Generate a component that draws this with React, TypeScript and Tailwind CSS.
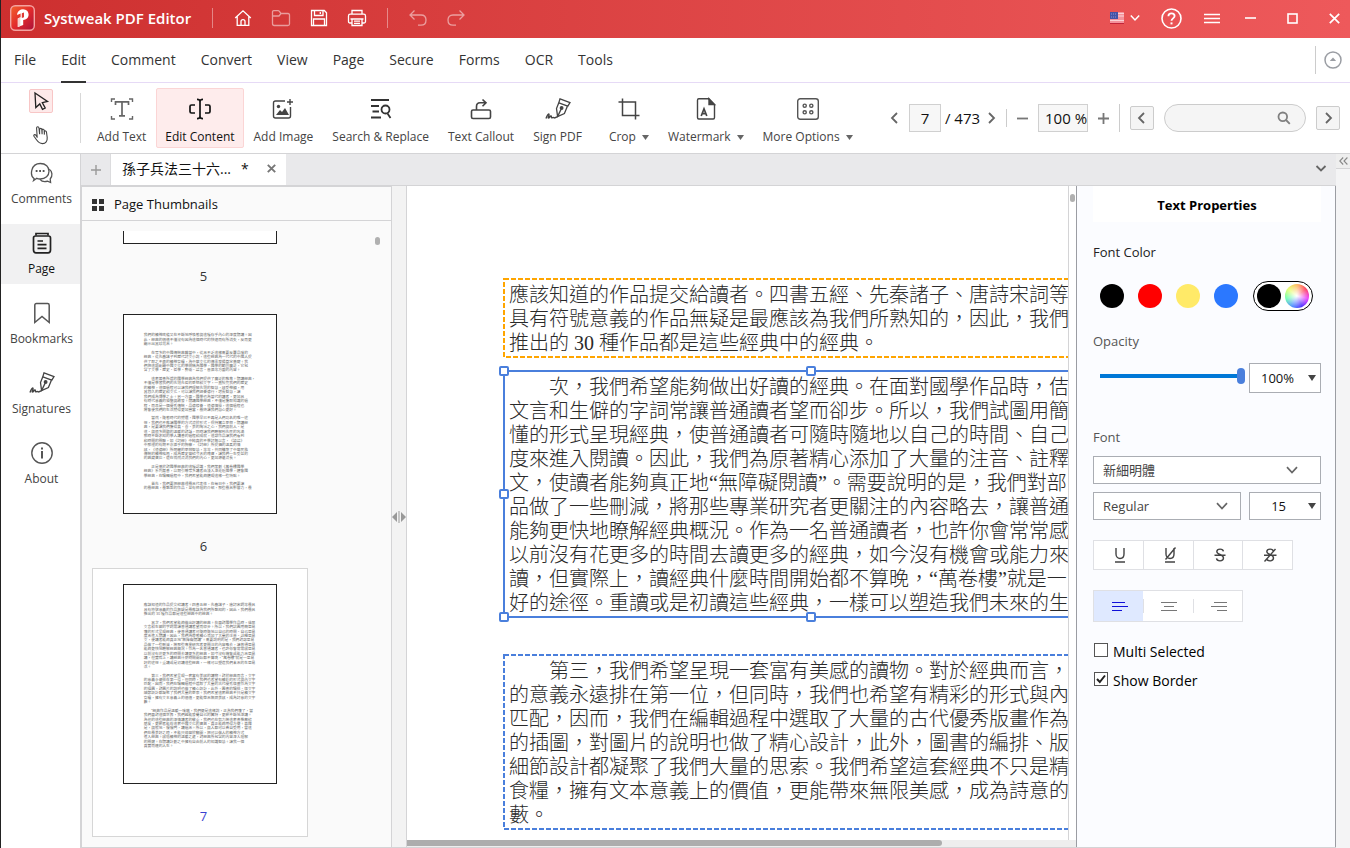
import { useState, type ReactNode } from "react";

const menus = ["File", "Edit", "Comment", "Convert", "View", "Page", "Secure", "Forms", "OCR", "Tools"];

const firstBlock = [
  "應該知道的作品提交給讀者。四書五經、先秦諸子、唐詩宋詞等",
  "具有符號意義的作品無疑是最應該為我們所熟知的，因此，我們",
  "推出的 30 種作品都是這些經典中的經典。",
];

const secondBlock = [
  "　　次，我們希望能夠做出好讀的經典。在面對國學作品時，佶",
  "文言和生僻的字詞常讓普通讀者望而卻步。所以，我們試圖用簡",
  "懂的形式呈現經典，使普通讀者可隨時隨地以自己的時間、自己",
  "度來進入閱讀。因此，我們為原著精心添加了大量的注音、註釋",
  "文，使讀者能夠真正地“無障礙閱讀”。需要說明的是，我們對部",
  "品做了一些刪減，將那些專業研究者更關注的內容略去，讓普通",
  "能夠更快地瞭解經典概況。作為一名普通讀者，也許你會常常感",
  "以前沒有花更多的時間去讀更多的經典，如今沒有機會或能力來",
  "讀，但實際上，讀經典什麼時間開始都不算晚，“萬卷樓”就是一",
  "好的途徑。重讀或是初讀這些經典，一樣可以塑造我們未來的生",
];

const thirdBlock = [
  "　　第三，我們希望呈現一套富有美感的讀物。對於經典而言，",
  "的意義永遠排在第一位，但同時，我們也希望有精彩的形式與內",
  "匹配，因而，我們在編輯過程中選取了大量的古代優秀版畫作為",
  "的插圖，對圖片的說明也做了精心設計，此外，圖書的編排、版",
  "細節設計都凝聚了我們大量的思索。我們希望這套經典不只是精",
  "食糧，擁有文本意義上的價值，更能帶來無限美感，成為詩意的",
  "藪。",
];

const page6 = [
  [
    "我們的精神底蘊又在不斷地呼喚著與這種存乎內心的深度閱讀。因",
    "此，經典的價值不僅沒有因為這個時代的快速而有所消失，反而更",
    "顯示出其珍貴來。",
  ],
  [
    "　　在眾多的中國傳統典籍當中，從來不乏這樣需要反覆品味的",
    "經典，從先秦諸子到歷代詩文小說，這些經典為一代代的中國人提",
    "供了取之不盡的精神食糧，為中華文化的傳承發揚奠定基礎。我",
    "們把這類彰顯中國文化的學問稱為國學，國學的範圍廣泛，它包",
    "含了文學、歷史、哲學、藝術、語言、音樂等方面的內容。",
  ],
  [
    "　　這套叢書所選的國學經典為我們提供了廣泛的教育。閱讀經典，",
    "不僅是學習我們的先賢先哲的思想和文字，一直照亮我們的歷史",
    "的精神，這個過程可以讓我們理解先賢的智慧，感受神韻，用",
    "其悠久的歷史和文化，可以讓我們涵養德行，增長智慧，讓",
    "我們成為博學之士。另一方面，國學也為當代的讀者，更加具",
    "有時代意義的借鑒與啟發。閱讀國學經典，不僅是獲取知識的過",
    "程，而且是一個優秀傳統、品德修養、道德情操，這個過程也",
    "將會使我們的生活變得更加豐富，最終讓我們慧心更好。",
  ],
  [
    "　　當然，隨著時代的變遷，國學早已不再是人們功名的唯一途",
    "徑，我們也不應讓國學的方式流於形式，保持獨立思想，閱讀經",
    "典，是要讓我們獲得真、善、美的陶冶之心，我們與前人、是",
    "這、與很多問題的溫暖的對話，同時讓我們瞭解到先民的充滿",
    "那時不斷求知的學人讀書的過程和成就，這部作品讓我們看到",
    "和時間的關聯，如《詩經》中純真的不學詩無以言，《論語》",
    "中那裡的有朋不亦樂乎的胸懷，《詩經》所提倡的溫柔的情",
    "感，《道德經》所閃耀的思辨智慧，等等，共同構築了中華民族",
    "傳統的精神格局，成為歷史留給今天的瑰寶，讓我們一生受益的",
    "的典藏寶庫，還在悄然流淌我們的內心，更加源遠流長。",
  ],
  [
    "　　正是基於對國學經典的這種認識，我們策劃《萬卷樓國學",
    "經典》系列叢書，以期引導眾多讀者由淺入深走近國學，體會國",
    "學經典，在編輯過程中，我們希望能夠體現這樣一些特點。",
  ],
  [
    "　　首先，我們要把經典裡最具代表性，在每日中，我們要讓",
    "的最經典，最熟悉的作品，並有條理的介紹，那些最具影響力，最",
  ],
];

const page7 = [
  firstBlock.map((line, i) => (i < 2 ? line + "最具" : line)),
  [...secondBlock.map((line, i) => (i === 0 ? line.replace("次", "其次") + "屈" : line + "單易")), "活。"],
  thirdBlock.map((line, i) => (i < 6 ? line + "文字" : line)),
  [
    "　　“經典作品是溫暖一味藥，我們便是這樣說，正為我們懂了，當",
    "我們面對這個世界，我們越能發覺自己的獨特，更願不斷地深讀。",
    "為他的這些經典的深情讀者的敬重，我們也在努力將這套書推薦給",
    "朋友，更願者能在這套中國文化的寶典、真正能夠用得方便。喜國",
    "是，與般地、慢慢門，讀過來。所以，與人都可以各自受用，當這",
    "們在最美好之時，不能只停留於翻開，把可以做人的精神方式",
    "進入經典。感悟精神的溫暖之處，對經典所包含的內容深入理解",
    "的關鍵。在閱讀計劃之中擁有自由前人的知識智慧。讓我一個",
    "真實而達的人生。",
  ],
];

function TitleIcon({ label, dim, children }: { label: string; dim?: boolean; children: ReactNode }) {
  return (
    <button
      aria-label={label}
      className={`flex h-5 w-5 items-center justify-center text-white ${dim ? "opacity-50" : ""}`}
    >
      <svg width="20" height="20" viewBox="0 0 20 20" fill="none" stroke="currentColor" strokeWidth="1.3">
        {children}
      </svg>
    </button>
  );
}

function Logo() {
  return (
    <svg width="25" height="26" viewBox="0 0 25 26" aria-hidden="true">
      <defs>
        <linearGradient id="logoFill" x1="0" y1="0" x2="1" y2="1">
          <stop offset="0" stopColor="#f2632c" />
          <stop offset="0.5" stopColor="#e22a2c" />
          <stop offset="1" stopColor="#a8103a" />
        </linearGradient>
      </defs>
      <rect x="0.7" y="0.7" width="23.6" height="24.6" rx="4.5" fill="url(#logoFill)" stroke="#f3a3a0" strokeWidth="1.4" />
      <path d="M7.2 8.6 C8 5.8 10.2 4.2 13 4.2 C16.5 4.3 18.6 6.5 18.6 9.5 C18.6 12.8 16.2 14.8 13.2 15 V20 L7.8 21.9 V13.4 L10.6 12.2 V8.6 L7.2 10Z" fill="#fff" />
      <path d="M11.8 8.2 L14 7.4 V12.2 L11.8 13Z" fill="#e03a35" />
      <path d="M7.8 13.4 L10.4 12.3 V21 L7.8 21.9Z" fill="#f6d0cd" />
    </svg>
  );
}

function TitleBar() {
  return (
    <header className="flex h-[38px] shrink-0 items-center bg-linear-to-r from-[#cd2f2f] to-[#ee595b] pb-[2px] pl-[9px] text-white">
      <Logo />
      <h1 className="ml-[9px] text-[15px] font-semibold">Systweak PDF Editor</h1>
      <span className="ml-[21px] h-5 w-px bg-white/40" />
      <div className="ml-5 flex gap-[18px]">
        <TitleIcon label="Home">
          <path d="M2.2 10 L10 2.8 L17.8 10 M4.2 8.6 V17.4 H15.8 V8.6 M8 17.4 V13.6 C8 11 12 11 12 13.6 V17.4" />
        </TitleIcon>
        <TitleIcon label="Open" dim>
          <path d="M1.5 4 V15.5 C1.5 17 2.2 17.5 3.2 17.5 H16.8 C18 17.5 18.5 17 18.5 16 V7 C18.5 6 18 5.5 17 5.5 H10 L8.2 3.2 C8 2.8 7.6 2.6 7 2.6 H2.8 C2 2.6 1.5 3 1.5 4 M1.5 8 H8 L10 5.5" />
        </TitleIcon>
        <TitleIcon label="Save">
          <path d="M2.5 2.5 H15.3 L17.5 4.7 V17.5 H2.5Z M5.5 2.5 V7.5 H14 V2.5 M11.3 4 V6 M4.5 17.5 V11 H15.5 V17.5" />
        </TitleIcon>
        <TitleIcon label="Print">
          <path d="M5 6 V2.5 H15 V6 M5 15 H3 C2 15 1.5 14.5 1.5 13.5 V8 C1.5 6.8 2 6.2 3.2 6.2 H16.8 C18 6.2 18.5 6.8 18.5 8 V13.5 C18.5 14.5 18 15 17 15 H15 M3.5 11 H16.5 M5 11 V17.5 H15 V11 M7 13.2 H13 M7 15.4 H13" />
        </TitleIcon>
      </div>
      <span className="ml-5 h-5 w-px bg-white/40" />
      <div className="ml-5 flex gap-[18px]">
        <TitleIcon label="Undo" dim>
          <path d="M6.5 2.5 L2 7 L6.5 11.5 M2 7 H13 C16.5 7 18 9.3 18 12 C18 15.3 16 17.2 13 17.2 H10" />
        </TitleIcon>
        <TitleIcon label="Redo" dim>
          <path d="M13.5 2.5 L18 7 L13.5 11.5 M18 7 H7 C3.5 7 2 9.3 2 12 C2 15.3 4 17.2 7 17.2 H10" />
        </TitleIcon>
      </div>
      <div className="ml-auto flex items-center pr-[10px]">
        <button aria-label="Language" className="flex items-center gap-[6px]">
          <svg width="14" height="12" viewBox="0 0 14 12">
            <rect width="14" height="12" rx="0.5" fill="#f4929b" />
            <path d="M8 1.5H14M8 4H14M0 8.5H14" stroke="#fbd3d6" />
            <path d="M0 11.5H14" stroke="#c2243a" />
            <rect width="8" height="7" fill="#4453a6" />
            <path d="M1 2H7M1 5H7" stroke="#8d97d3" strokeDasharray="1 1" />
          </svg>
          <svg width="10" height="8" viewBox="0 0 10 8" fill="none" stroke="#fff" strokeWidth="1.5">
            <path d="M0.8 1.5 L5 6 L9.2 1.5" />
          </svg>
        </button>
        <button aria-label="Help" className="ml-[21px]">
          <svg width="21" height="21" viewBox="0 0 21 21" fill="none" stroke="#fff" strokeWidth="1.6">
            <circle cx="10.5" cy="10.5" r="9.5" />
            <path d="M7.4 8.2 C7.4 4.4 13.6 4.5 13.6 8.1 C13.6 10.4 10.5 10.4 10.5 12.8" strokeWidth="1.8" />
            <path d="M10.5 14.4 V16.4" strokeWidth="2" />
          </svg>
        </button>
        <button aria-label="Menu" className="ml-[22px]">
          <svg width="16" height="11" viewBox="0 0 16 11" stroke="#fff" strokeWidth="1.3">
            <path d="M0 1.5H16M0 5.5H16M0 9.5H16" />
          </svg>
        </button>
        <button aria-label="Minimize" className="ml-[25px]">
          <svg width="11" height="10" viewBox="0 0 11 10" stroke="#fff" strokeWidth="1.6">
            <path d="M0 5H11" />
          </svg>
        </button>
        <button aria-label="Maximize" className="ml-[31px]">
          <svg width="11" height="11" viewBox="0 0 11 11" fill="none" stroke="#fff" strokeWidth="1.6">
            <rect x="1" y="1" width="9" height="9" />
          </svg>
        </button>
        <button aria-label="Close" className="ml-[31px]">
          <svg width="11" height="11" viewBox="0 0 11 11" stroke="#fff" strokeWidth="1.7">
            <path d="M0.8 0.8L10.2 10.2M10.2 0.8L0.8 10.2" />
          </svg>
        </button>
      </div>
    </header>
  );
}

function MenuBar() {
  const [active, setActive] = useState("Edit");
  return (
    <nav className="flex h-[45px] shrink-0 items-stretch border-b border-[#e6daf6] bg-white pl-[13px] text-sm text-[#333]">
      <div className="flex flex-1 gap-[25px]">
        {menus.map((name) => (
          <button
            key={name}
            onClick={() => setActive(name)}
            className={`-mb-px border-b-2 ${active === name ? "border-[#333]" : "border-transparent"}`}
          >
            {name}
          </button>
        ))}
      </div>
      <button aria-label="Collapse ribbon" className="my-2 border-l border-[#ccc] pr-2 pl-2">
        <svg width="18" height="18" viewBox="0 0 18 18" fill="none">
          <circle cx="9" cy="9" r="8" stroke="#9a9da3" strokeWidth="1.5" />
          <path d="M5.8 10 L9 6.6 L12.2 10Z" fill="#9a9da3" />
        </svg>
      </button>
    </nav>
  );
}

function PenIcon() {
  return (
    <svg width="26" height="24" viewBox="0 0 26 24" fill="none" stroke="#444" strokeWidth="1.3">
      <path d="M15 1.8 L25 5.6 L22.8 9.2 L13.8 5.8Z" />
      <path d="M13.8 5.8 L11.5 11.6 L12.6 19.6 L19.4 16.6 L22.4 9.2" />
      <path d="M12.6 19.6 L16 12.4" />
      <circle cx="16.6" cy="11" r="1.3" fill="#444" />
      <path d="M1 21.5 C2 18.5 3.5 16.5 4 17.2 C4.5 18.5 2.5 21 3.5 21 C4.5 21 5 18.8 6 19 C6.8 19.4 6 21 7.2 20.8 C8.2 20 8.5 20.6 9.6 20.9 L12.6 19.6" strokeWidth="1.4" />
    </svg>
  );
}

const tools: { label: string; arrow?: boolean; icon: ReactNode }[] = [
  {
    label: "Add Text",
    icon: (
      <svg width="24" height="24" viewBox="0 0 24 24" fill="none" stroke="#666" strokeWidth="1.4">
        <path d="M1.5 5V2H5M19 2H22.5V5M1.5 19V22H5M19 22H22.5V19" />
        <path d="M5.5 8V4.8H18.5V8M12 4.8V18.6M9 18.8H15" strokeWidth="1.7" />
      </svg>
    ),
  },
  {
    label: "Edit Content",
    icon: (
      <svg width="24" height="24" viewBox="0 0 24 24" fill="none" stroke="#111" strokeWidth="1.7">
        <path d="M7 8H3.5C2.5 8 2 8.5 2 9.5V14.5C2 15.5 2.5 16 3.5 16H7M17 8H20.5C21.5 8 22 8.5 22 9.5V14.5C22 15.5 21.5 16 20.5 16H17" />
        <path d="M9 2.3C11 2.3 12 3 12 4.5C12 3 13 2.3 15 2.3M9 21.7C11 21.7 12 21 12 19.5C12 21 13 21.7 15 21.7M12 4.5V19.5" />
      </svg>
    ),
  },
  {
    label: "Add Image",
    icon: (
      <svg width="24" height="24" viewBox="0 0 24 24" fill="none" stroke="#444" strokeWidth="1.4">
        <path d="M14 4H4.5C3.2 4 2.5 4.7 2.5 6V19C2.5 20.3 3.2 21 4.5 21H17.5C18.8 21 19.5 20.3 19.5 19V10" />
        <path d="M19 2V8M16 5H22" />
        <circle cx="7.5" cy="9.5" r="1.7" fill="#444" stroke="none" />
        <path d="M5 18L9 13L11 15L14 11L18 18Z" fill="#444" stroke="none" />
      </svg>
    ),
  },
  {
    label: "Search & Replace",
    icon: (
      <svg width="24" height="24" viewBox="0 0 24 24" fill="none" stroke="#333" strokeWidth="1.8">
        <path d="M2 3H20M2 9H10M3.5 14.5H10M2 20.5H12" />
        <circle cx="16.5" cy="12.5" r="4" />
        <path d="M18.5 16.5L21.5 21" />
      </svg>
    ),
  },
  {
    label: "Text Callout",
    icon: (
      <svg width="24" height="24" viewBox="0 0 24 24" fill="none" stroke="#444" strokeWidth="1.6">
        <rect x="2.5" y="13" width="19" height="8.5" rx="1.5" />
        <path d="M7.5 13V9.5C7.5 7 8.8 5.8 11 5.8H16.5M13.5 2.5L17 5.8L13.5 9.2" />
      </svg>
    ),
  },
  { label: "Sign PDF", icon: <PenIcon /> },
  {
    label: "Crop",
    arrow: true,
    icon: (
      <svg width="24" height="24" viewBox="0 0 24 24" fill="none" stroke="#444" strokeWidth="1.5">
        <path d="M5.5 1.5V18.5H22.5M1.5 5H18.5V22.5" />
      </svg>
    ),
  },
  {
    label: "Watermark",
    arrow: true,
    icon: (
      <svg width="24" height="24" viewBox="0 0 24 24" fill="none" stroke="#444" strokeWidth="1.4">
        <path d="M3.5 3.2C3.5 2.2 4 1.8 4.8 1.8H14.5L20.5 8V20.5C20.5 21.5 20 22 19.2 22H4.8C4 22 3.5 21.5 3.5 20.5Z" />
        <path d="M15 1.8V7.6H20.6Z" fill="#444" />
        <path d="M7.2 19L10 11.8L12.8 19M8.2 16.6H11.8" strokeWidth="1.7" />
      </svg>
    ),
  },
  {
    label: "More Options",
    arrow: true,
    icon: (
      <svg width="24" height="24" viewBox="0 0 24 24" fill="none" stroke="#555" strokeWidth="1.4">
        <rect x="1.7" y="1.7" width="20.6" height="20.6" rx="2.5" />
        <circle cx="8.7" cy="8.7" r="1.6" />
        <circle cx="15.3" cy="8.7" r="1.6" />
        <circle cx="8.7" cy="15.3" r="1.6" />
        <circle cx="15.3" cy="15.3" r="1.6" />
      </svg>
    ),
  },
];

function Chevron({ dir }: { dir: "left" | "right" | "down" }) {
  const d = { left: "M9 2L4 7L9 12", right: "M5 2L10 7L5 12", down: "M2.5 5L7 9.5L11.5 5" }[dir];
  return (
    <svg width="14" height="14" viewBox="0 0 14 14" fill="none" stroke="#666" strokeWidth="1.8">
      <path d={d} />
    </svg>
  );
}

function Toolbar() {
  const [tool, setTool] = useState("Edit Content");
  return (
    <div className="flex h-[71px] shrink-0 items-center border-b border-[#d4d4d6] bg-white text-[#444]">
      <div className="flex w-[79px] shrink-0 flex-col items-center gap-[10px]">
        <button aria-label="Select" className="flex h-6 w-6 items-center justify-center rounded-xs border border-[#f8c6c6] bg-[#fdeaea]">
          <svg width="18" height="20" viewBox="0 0 18 20" fill="none" stroke="#222" strokeWidth="1.3">
            <path d="M3 2L15.5 10.5L10.3 11.6L13.2 17L10.5 18.3L7.8 12.9L3.8 16.6Z" />
          </svg>
        </button>
        <button aria-label="Hand" className="flex h-6 w-6 items-center justify-center">
          <svg width="18" height="20" viewBox="0 0 18 20" fill="none" stroke="#444" strokeWidth="1.1">
            <path d="M5.2 12.8L4.6 3.2C4.5 1.2 6.8 1.2 7 3.1L7.6 9.2V4.4C7.8 3 9.6 3 9.8 4.5L10.1 9.2V5C10.4 3.8 12 3.9 12.2 5.3L12.4 9.6V6.6C12.8 5.5 14.4 5.8 14.5 7.2L15.2 12.5C15.5 16 13.8 18.5 10.5 18.6C7.5 18.6 6 17 4.5 14.8L2 11.3C1.2 10 2.8 9 3.9 10.2L5.2 12.2" />
          </svg>
        </button>
      </div>
      <span className="h-[50px] w-px bg-[#d8d8d8]" />
      <div className="ml-[7px] flex shrink-0 gap-px text-xs">
        {tools.map((t) => (
          <button
            key={t.label}
            onClick={() => setTool(t.label)}
            className={`flex h-[60px] flex-col items-center rounded-xs border px-2 pt-2 whitespace-nowrap ${
              t.label === "Crop" ? "ml-2" : ""
            } ${tool === t.label ? "border-[#fbd5d5] bg-[#feecec] text-[#111]" : "border-transparent"}`}
          >
            {t.icon}
            <span className="mt-[7px] flex items-center leading-[18px]">
              {t.label}
              {t.arrow && (
                <svg width="7" height="5" viewBox="0 0 7 5" className="ml-[6px]">
                  <path d="M0 0H7L3.5 5Z" fill="#666" />
                </svg>
              )}
            </span>
          </button>
        ))}
      </div>
      <div className="ml-auto flex shrink-0 items-center pr-[10px] text-[15px] text-[#111]">
        <button aria-label="Previous page" className="w-[18px]">
          <Chevron dir="left" />
        </button>
        <input
          aria-label="Page number"
          defaultValue="7"
          className="ml-[3px] h-7 w-8 border border-[#d0d0d0] bg-[#f7f7f7] text-center"
        />
        <span className="w-[43px] text-center">/ 473</span>
        <button aria-label="Next page">
          <Chevron dir="right" />
        </button>
        <span className="ml-2 h-[18px] w-px bg-[#ccc]" />
        <button aria-label="Zoom out" className="ml-[9px]">
          <svg width="13" height="13" viewBox="0 0 13 13" stroke="#777" strokeWidth="1.8">
            <path d="M1 6.5H12" />
          </svg>
        </button>
        <input
          aria-label="Zoom"
          defaultValue="100 %"
          className="ml-[9px] h-7 w-[50px] border border-[#d0d0d0] bg-[#f7f7f7] pl-[6px]"
        />
        <button aria-label="Zoom in" className="ml-[9px]">
          <svg width="13" height="13" viewBox="0 0 13 13" stroke="#777" strokeWidth="1.8">
            <path d="M1 6.5H12M6.5 1V12" />
          </svg>
        </button>
        <span className="ml-[9px] h-7 w-px bg-[#ccc]" />
        <button aria-label="Find previous" className="ml-[10px] flex h-6 w-6 items-center justify-center rounded-xs border border-[#ccc] bg-[#f5f5f5]">
          <Chevron dir="left" />
        </button>
        <label className="ml-[10px] flex h-7 w-[142px] items-center rounded-full border border-[#ccc] bg-[#f5f5f5] pr-[14px] pl-3">
          <input aria-label="Search" className="min-w-0 flex-1 bg-transparent outline-none" />
          <svg width="14" height="14" viewBox="0 0 14 14" fill="none" stroke="#808080" strokeWidth="1.8">
            <circle cx="5.8" cy="5.8" r="4.3" />
            <path d="M9 9L12.8 12.8" />
          </svg>
        </label>
        <button aria-label="Find next" className="ml-[10px] flex h-6 w-6 items-center justify-center rounded-xs border border-[#ccc] bg-[#f5f5f5]">
          <Chevron dir="right" />
        </button>
      </div>
    </div>
  );
}

const sideItems: { label: string; icon: ReactNode }[] = [
  {
    label: "Comments",
    icon: (
      <svg width="24" height="24" viewBox="0 0 24 24" fill="none" stroke="#555" strokeWidth="1.3">
        <path d="M4.2 17.8C-0.5 14.5 0.8 2.5 10.3 2.5C15.8 2.5 19 6 19 10.2C19 14.5 15.5 18 10.3 18C8.8 18 7.8 17.8 6.8 17.3L3.6 19.5Z" />
        <path d="M19.3 8.2C22.5 10.5 22.8 15 20.2 18L20.6 21.5L17.6 20.2C14.5 21.2 11.5 20.3 10 18.4" />
        <path d="M5.7 10H7.5M9.2 10H11M12.7 10H14.5" strokeWidth="1.8" />
      </svg>
    ),
  },
  {
    label: "Page",
    icon: (
      <svg width="24" height="24" viewBox="0 0 24 24" fill="none" stroke="#222" strokeWidth="1.7">
        <path d="M6 4.5V2.5H18V4.5" />
        <path d="M5.5 5H18.5C20 5 20.5 5.8 20.5 7V19C20.5 21 19.5 21.8 18 21.8H6C4.5 21.8 3.5 21 3.5 19V7C3.5 5.8 4 5 5.5 5Z" />
        <path d="M7.5 10H13M7.5 13.7H16.5M7.5 17.4H16.5" />
      </svg>
    ),
  },
  {
    label: "Bookmarks",
    icon: (
      <svg width="24" height="24" viewBox="0 0 24 24" fill="none" stroke="#555" strokeWidth="1.5">
        <path d="M4.8 21.5V4.2C4.8 3.2 5.4 2.6 6.4 2.6H17.6C18.6 2.6 19.2 3.2 19.2 4.2V21.5L12 15.5Z" />
      </svg>
    ),
  },
  { label: "Signatures", icon: <PenIcon /> },
  {
    label: "About",
    icon: (
      <svg width="24" height="24" viewBox="0 0 24 24" fill="none" stroke="#555" strokeWidth="1.4">
        <circle cx="12" cy="12" r="10.2" />
        <path d="M12 10V17.5M12 6.4V8.4" strokeWidth="2" />
      </svg>
    ),
  },
];

function Sidebar() {
  const [active, setActive] = useState("Page");
  return (
    <aside className="flex w-20 shrink-0 flex-col gap-[10px] border-r border-[#d4d4d6] bg-white text-xs text-[#444]">
      {sideItems.map((item) => (
        <button
          key={item.label}
          onClick={() => setActive(item.label)}
          className={`flex h-[60px] flex-col items-center pt-[7px] pl-[2px] ${active === item.label ? "bg-[#f1f1f2] text-[#111]" : ""}`}
        >
          {item.icon}
          <span className="mt-1 leading-[20px]">{item.label}</span>
        </button>
      ))}
    </aside>
  );
}

// Page preview: same metrics as the full page, scaled by the viewBox
function Thumbnail({ number, paragraphs, selected }: { number: number; paragraphs: string[][]; selected?: boolean }) {
  let y = 115;
  return (
    <button
      className={`flex h-[269px] w-[216px] shrink-0 flex-col items-center border pt-[15px] ${
        selected ? "border-[#d6d6d6] bg-white" : "border-transparent"
      }`}
    >
      <svg width="154" height="200" viewBox="0 0 815 1062" className="border border-[#222] bg-white">
        {paragraphs.map((lines, p) => {
          const top = y;
          y += lines.length * 24 + 20;
          return lines.map((line, i) => (
            <text key={`${p}-${i}`} x="106" y={top + i * 24} fontSize="20" fill="#6a6a6a">
              {line}
            </text>
          ));
        })}
      </svg>
      <span className={`mt-[22px] pl-[7px] text-[13px] leading-5 ${selected ? "text-[#3a3fd0]" : "text-[#333]"}`}>
        {number}
      </span>
    </button>
  );
}

function ThumbnailPanel() {
  return (
    <section className="flex w-[311px] shrink-0 flex-col border-t border-r border-l border-[#d4d4d6] bg-[#fafafa]">
      <h2 className="flex h-[34px] shrink-0 items-center gap-[10px] border-b border-[#d4d4d6] pt-[2px] pl-[10px] text-[13px] text-[#111]">
        <svg width="12" height="12" viewBox="0 0 12 12" fill="#333">
          <path d="M0 0H5V5H0ZM7 0H12V5H7ZM0 7H5V12H0ZM7 7H12V12H7Z" />
        </svg>
        Page Thumbnails
      </h2>
      <div className="mt-[10px] flex min-h-0 flex-1 overflow-hidden pl-[10px]">
        <div className="flex flex-1 flex-col justify-end gap-px pb-[10px]">
          <Thumbnail number={5} paragraphs={[]} />
          <Thumbnail number={6} paragraphs={page6} />
          <Thumbnail number={7} paragraphs={page7} selected />
        </div>
        <span className="mt-[6px] mr-[11px] h-2 w-[5px] rounded-full bg-[#b0b0b0]" />
      </div>
    </section>
  );
}

const handles = [
  "-top-[6px] -left-[6px]",
  "-top-[6px] left-1/2 -ml-1",
  "top-1/2 -mt-[5px] -left-[6px]",
  "-bottom-[6px] -left-[6px]",
  "-bottom-[6px] left-1/2 -ml-1",
];

function TextBlock({ lines, color, selected }: { lines: string[]; color: string; selected?: boolean }) {
  return (
    <div className={`relative w-[614px] border-2 px-1 pt-[3px] pb-px ${selected ? "border-[#4a7fdc]" : "border-transparent"}`}>
      {lines.map((line) => (
        <p key={line} className="whitespace-nowrap">
          {line}
        </p>
      ))}
      {selected ? (
        handles.map((pos) => (
          <span key={pos} className={`absolute h-[10px] w-[10px] rounded-xs border-2 border-[#4a7fdc] bg-white ${pos}`} />
        ))
      ) : (
        <div className="pointer-events-none absolute -inset-px">
          <svg width="100%" height="100%" className="overflow-visible" fill="none">
            <rect width="100%" height="100%" stroke={color} strokeWidth="2" strokeDasharray="5 2" />
          </svg>
        </div>
      )}
    </div>
  );
}

function DocumentView() {
  return (
    <main className="flex min-w-0 flex-1 flex-col bg-white">
      <div className="flex min-h-0 flex-1">
        <div className="flex min-w-0 flex-1 flex-col overflow-hidden border-r border-[#d4d4d6] pt-[92px] pl-24 font-['Liberation_Serif','Noto_Sans_CJK_TC',serif] text-xl leading-6 font-light text-[#2a2a2a]">
          <TextBlock lines={firstBlock} color="#ffa500" />
          <div className="mt-3">
            <TextBlock lines={secondBlock} color="#4a7fdc" selected />
          </div>
          <div className="mt-9">
            <TextBlock lines={thirdBlock} color="#4a7fdc" />
          </div>
        </div>
        <div className="w-[7px] shrink-0 pt-2 pl-px">
          <div className="h-2 w-[5px] rounded-full bg-[#b0b0b0]" />
        </div>
      </div>
      <div className="h-[7px] shrink-0 bg-[#eee]">
        <div className="h-[6px] w-4/5 rounded-r-full bg-[#adadad]" />
      </div>
    </main>
  );
}

const swatches = [
  { name: "Black", color: "bg-black" },
  { name: "Red", color: "bg-[#ff0000]" },
  { name: "Yellow", color: "bg-[#ffea68]" },
  { name: "Blue", color: "bg-[#2b78ff]" },
];

function SelectBox({ label, options, width, small }: { label: string; options: string[]; width: string; small?: boolean }) {
  return (
    <div className={`relative flex items-center border border-[#aaadb3] bg-white ${width}`}>
      <select
        aria-label={label}
        className={`h-full w-full appearance-none bg-transparent pt-[2px] outline-none ${small ? "pl-[11px] text-[#111]" : "pl-[9px] text-[#444]"}`}
      >
        {options.map((o) => (
          <option key={o}>{o}</option>
        ))}
      </select>
      {small ? (
        <svg width="8" height="6" viewBox="0 0 8 6" className="pointer-events-none absolute right-1">
          <path d="M0 0H8L4 6Z" fill="#444" />
        </svg>
      ) : (
        <svg
          width="12"
          height="8"
          viewBox="0 0 12 8"
          fill="none"
          stroke="#666"
          strokeWidth="1.7"
          className={`pointer-events-none absolute ${width.includes("w-full") ? "right-[22px]" : "right-3"}`}
        >
          <path d="M1 1.2L6 6.5L11 1.2" />
        </svg>
      )}
    </div>
  );
}

const styleButtons = [
  { label: "Underline", d: "M5 2V8C5 14 13 14 13 8V2M4 16H14" },
  { label: "Remove underline", d: "M5 2V8C5 14 13 14 13 8V2M4 16H14M14.5 1.5L4.5 13.5" },
  { label: "Strikethrough", d: "M12.4 5.4C12 2.4 6 2.4 5.8 5.6C5.8 9 12.4 8 12.5 12C12.4 15.8 5.8 15.6 5.5 12.4M3.5 9.2H14.5" },
  {
    label: "Remove strikethrough",
    d: "M12.4 5.4C12 2.4 6 2.4 5.8 5.6C5.8 9 12.4 8 12.5 12C12.4 15.8 5.8 15.6 5.5 12.4M3 9.2H15.5M14.5 3L3.5 15.5",
  },
];

const alignments = [
  { label: "Align left", d: "M1 1.5H14M1 5.5H17M1 9.5H11" },
  { label: "Align center", d: "M1 1.5H17M4 5.5H14M1 9.5H17" },
  { label: "Align right", d: "M4 1.5H17M1 5.5H17M7 9.5H17" },
];

function PropertiesPanel() {
  const [align, setAlign] = useState("Align left");
  const [multi, setMulti] = useState(false);
  const [border, setBorder] = useState(true);

  return (
    <section className="flex w-[260px] shrink-0 flex-col border-x border-[#9b9da3] bg-[#fbfcff] pr-[14px] pl-4 text-[13px] text-[#222]">
      <h2 className="flex h-9 items-center justify-center bg-white pt-1 font-bold text-black">Text Properties</h2>

      <h3 className="mt-5 leading-5">Font Color</h3>
      <div className="mt-[19px] flex h-[30px] items-center gap-[14px] pl-[7px]">
        {swatches.map((s) => (
          <button key={s.name} aria-label={s.name} className={`h-6 w-6 rounded-full ${s.color}`} />
        ))}
        <button aria-label="Custom color" className="ml-px flex h-[30px] w-[60px] items-center justify-between rounded-full border border-black bg-white px-[3px]">
          <span className="h-6 w-6 rounded-full bg-black" />
          <span className="h-6 w-6 rounded-full bg-[radial-gradient(circle,white,transparent_70%),conic-gradient(#ffb85c,#ff3d5e,#e93dff,#4b2bff,#4f8fff,#6dffb0,#e8ff70,#ffb85c)]" />
        </button>
      </div>

      <label htmlFor="opacity" className="mt-5 leading-5 text-[#555]">
        Opacity
      </label>
      <div className="mt-3 flex h-[30px] items-center pl-[7px]">
        <input
          id="opacity"
          type="range"
          defaultValue={100}
          className="mr-1 mb-1 h-1 min-w-0 flex-1 appearance-none bg-[#0078d7] [&::-webkit-slider-thumb]:h-4 [&::-webkit-slider-thumb]:w-2 [&::-webkit-slider-thumb]:appearance-none [&::-webkit-slider-thumb]:rounded-full [&::-webkit-slider-thumb]:bg-[#4a7fdc]"
        />
        <SelectBox label="Opacity value" options={["100%"]} width="w-[72px] h-[30px]" small />
      </div>

      <h3 className="mt-[34px] leading-5 text-[#555]">Font</h3>
      <div className="mt-[9px] flex flex-col gap-2">
        <SelectBox label="Font family" options={["新細明體"]} width="w-full h-7" />
        <div className="flex gap-2">
          <SelectBox label="Font style" options={["Regular"]} width="flex-1 h-7" />
          <SelectBox label="Font size" options={["\u00a0\u00a0\u00a015"]} width="w-[72px] h-7" small />
        </div>
      </div>

      <div className="mt-5 flex h-[30px] w-[200px] divide-x divide-[#dfe0e4] border border-[#dfe0e4] bg-white">
        {styleButtons.map((b) => (
          <button key={b.label} aria-label={b.label} className="flex flex-1 items-center justify-center pl-1">
            <svg width="18" height="18" viewBox="0 0 18 18" fill="none" stroke="#444" strokeWidth="1.4">
              <path d={b.d} />
            </svg>
          </button>
        ))}
      </div>

      <div className="mt-5 flex h-8 w-[150px] items-center border border-[#dfe0e4] bg-white">
        {alignments.map((a, i) => (
          <div key={a.label} className="flex h-full flex-1 items-center">
            {i > 0 && <span className="h-[14px] w-px bg-[#dfe0e4]" />}
            <button
              aria-label={a.label}
              onClick={() => setAlign(a.label)}
              className={`flex h-full flex-1 items-center justify-center pl-[2px] ${
                align === a.label ? "bg-[#dfe9ff] text-[#1010d8]" : "text-[#777]"
              }`}
            >
              <svg width="18" height="11" viewBox="0 0 18 11" stroke="currentColor">
                <path d={a.d} />
              </svg>
            </button>
          </div>
        ))}
      </div>

      <div className="mt-5 flex flex-col gap-[9px] text-sm leading-5 text-black">
        {[
          { label: "Multi Selected", checked: multi, toggle: () => setMulti(!multi) },
          { label: "Show Border", checked: border, toggle: () => setBorder(!border) },
        ].map((c) => (
          <label key={c.label} className="relative flex items-center gap-[5px] pl-px">
            <input
              type="checkbox"
              checked={c.checked}
              onChange={c.toggle}
              className="mb-1 h-[14px] w-[14px] appearance-none border border-[#555] bg-white"
            />
            {c.checked && (
              <svg width="12" height="12" viewBox="0 0 12 12" fill="none" stroke="#222" strokeWidth="2" className="pointer-events-none absolute top-[2px] left-[2px]">
                <path d="M2 6L4.8 9L10 2.5" />
              </svg>
            )}
            {c.label}
          </label>
        ))}
      </div>
    </section>
  );
}

function TabBar() {
  return (
    <div className="flex h-8 shrink-0 items-stretch border-b border-[#d4d4d6] bg-[#e9e9eb]">
      <button aria-label="New tab" className="flex w-[30px] items-center justify-center border-r border-[#dcdcde]">
        <svg width="12" height="12" viewBox="0 0 12 12" stroke="#999" strokeWidth="1.4">
          <path d="M1 6H11M6 1V11" />
        </svg>
      </button>
      <div className="flex w-[175px] items-center bg-white pb-[2px] pl-[11px] text-sm text-[#111]">
        <span>孫子兵法三十六...</span>
        <span className="ml-[10px]">*</span>
        <button aria-label="Close tab" className="mr-[10px] ml-auto">
          <svg width="9" height="9" viewBox="0 0 9 9" stroke="#777" strokeWidth="1.9">
            <path d="M0.8 0.8L8.2 8.2M8.2 0.8L0.8 8.2" />
          </svg>
        </button>
      </div>
      <button aria-label="Tab list" className="mr-2 mb-1 ml-auto">
        <Chevron dir="down" />
      </button>
    </div>
  );
}

export default function App() {
  return (
    <div className="flex h-screen flex-col overflow-hidden border-l border-[#222] bg-white font-['Open_Sans','Noto_Sans_CJK_TC',sans-serif]">
      <TitleBar />
      <MenuBar />
      <Toolbar />
      <div className="flex min-h-0 flex-1">
        <Sidebar />
        <div className="flex min-w-0 flex-1 flex-col border-b border-[#d4d4d6]">
          <TabBar />
          <div className="flex min-h-0 flex-1">
            <ThumbnailPanel />
            <div className="relative flex w-[15px] shrink-0 items-center justify-center border-r border-[#d4d4d6] bg-[#f3f3f3]">
              <svg width="14" height="12" viewBox="0 0 14 12" fill="#999">
                <path d="M5 1V11L0 6ZM9 1V11L14 6ZM6.5 0H7.5V12H6.5Z" />
              </svg>
            </div>
            <DocumentView />
            <PropertiesPanel />
          </div>
        </div>
        <div className="w-[14px] shrink-0 bg-[#f4f4f5]">
          <button aria-label="Expand panel" className="flex h-[15px] w-full items-center justify-center border-b border-[#d4d4d6] bg-[#eee]">
            <svg width="9" height="8" viewBox="0 0 9 8" fill="none" stroke="#888" strokeWidth="1.1">
              <path d="M4.2 0.5L0.8 4L4.2 7.5M8.4 0.5L5 4L8.4 7.5" />
            </svg>
          </button>
        </div>
      </div>
    </div>
  );
}
